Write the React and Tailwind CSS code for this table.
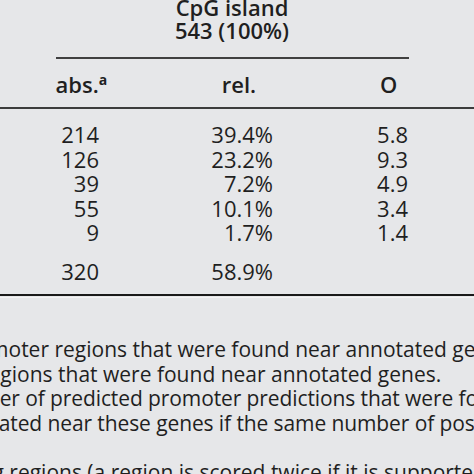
export default function App() {
  const rows = [
    ["214", "39.4%", "5.8"],
    ["126", "23.2%", "9.3"],
    ["39", "7.2%", "4.9"],
    ["55", "10.1%", "3.4"],
    ["9", "1.7%", "1.4"],
  ];
  return (
    <div
      className="w-[474px] h-[474px] overflow-hidden bg-[#e6e7e9] text-[#1f1f1f] text-[22px]"
      style={{ fontFamily: '"Open Sans", "Noto Sans", sans-serif' }}
    >
      <div className="mt-[-4px] leading-[23px] font-semibold text-center w-[464px]">
        <div>CpG island</div>
        <div>543 (100%)</div>
      </div>
      <div className="mt-[15px] ml-[56px] w-[353px] h-[2px] bg-[#404040]" />
      <div className="mt-[13px] flex h-[24px] leading-[24px] font-semibold">
        <div className="w-[56px]" />
        <div className="w-[120px]">
          abs.<span className="text-[14px] leading-none relative top-[-8px] font-bold">a</span>
        </div>
        <div className="w-[130px] text-center">rel.</div>
        <div className="w-[172px] text-center">O</div>
      </div>
      <div className="mt-[11px] h-[2px] w-full bg-[#3c3c3c]" />
      <div className="mt-[13px] leading-[24.5px]">
        {rows.map((r, i) => (
          <div key={i} className="flex">
            <div className="w-[99px] text-right">{r[0]}</div>
            <div className="w-[174px] text-right">{r[1]}</div>
            <div className="w-[135px] text-right">{r[2]}</div>
          </div>
        ))}
      </div>
      <div className="mt-[14px] leading-[24.5px] flex">
        <div className="w-[99px] text-right">320</div>
        <div className="w-[174px] text-right">58.9%</div>
      </div>
      <div className="mt-[11px] h-[2px] w-full bg-[#1a1a1a]" />
      <div className="mt-[1px] h-[1px] w-full bg-[#f4f4f4]" />
      <div className="mt-[39px] leading-[24.5px] whitespace-nowrap text-[21px]">
        <div className="ml-[-45px]">promoter regions that were found near annotated genes</div>
        <div className="ml-[-20px]">regions that were found near annotated genes.</div>
        <div className="ml-[-58px] tracking-[-0.1px]">number of predicted promoter predictions that were found</div>
        <div className="ml-[-29px] tracking-[-0.1px]">located near these genes if the same number of positions</div>
        <div>&nbsp;</div>
        <div className="ml-[-67px]">scoring regions (a region is scored twice if it is supported</div>
      </div>
    </div>
  );
}
